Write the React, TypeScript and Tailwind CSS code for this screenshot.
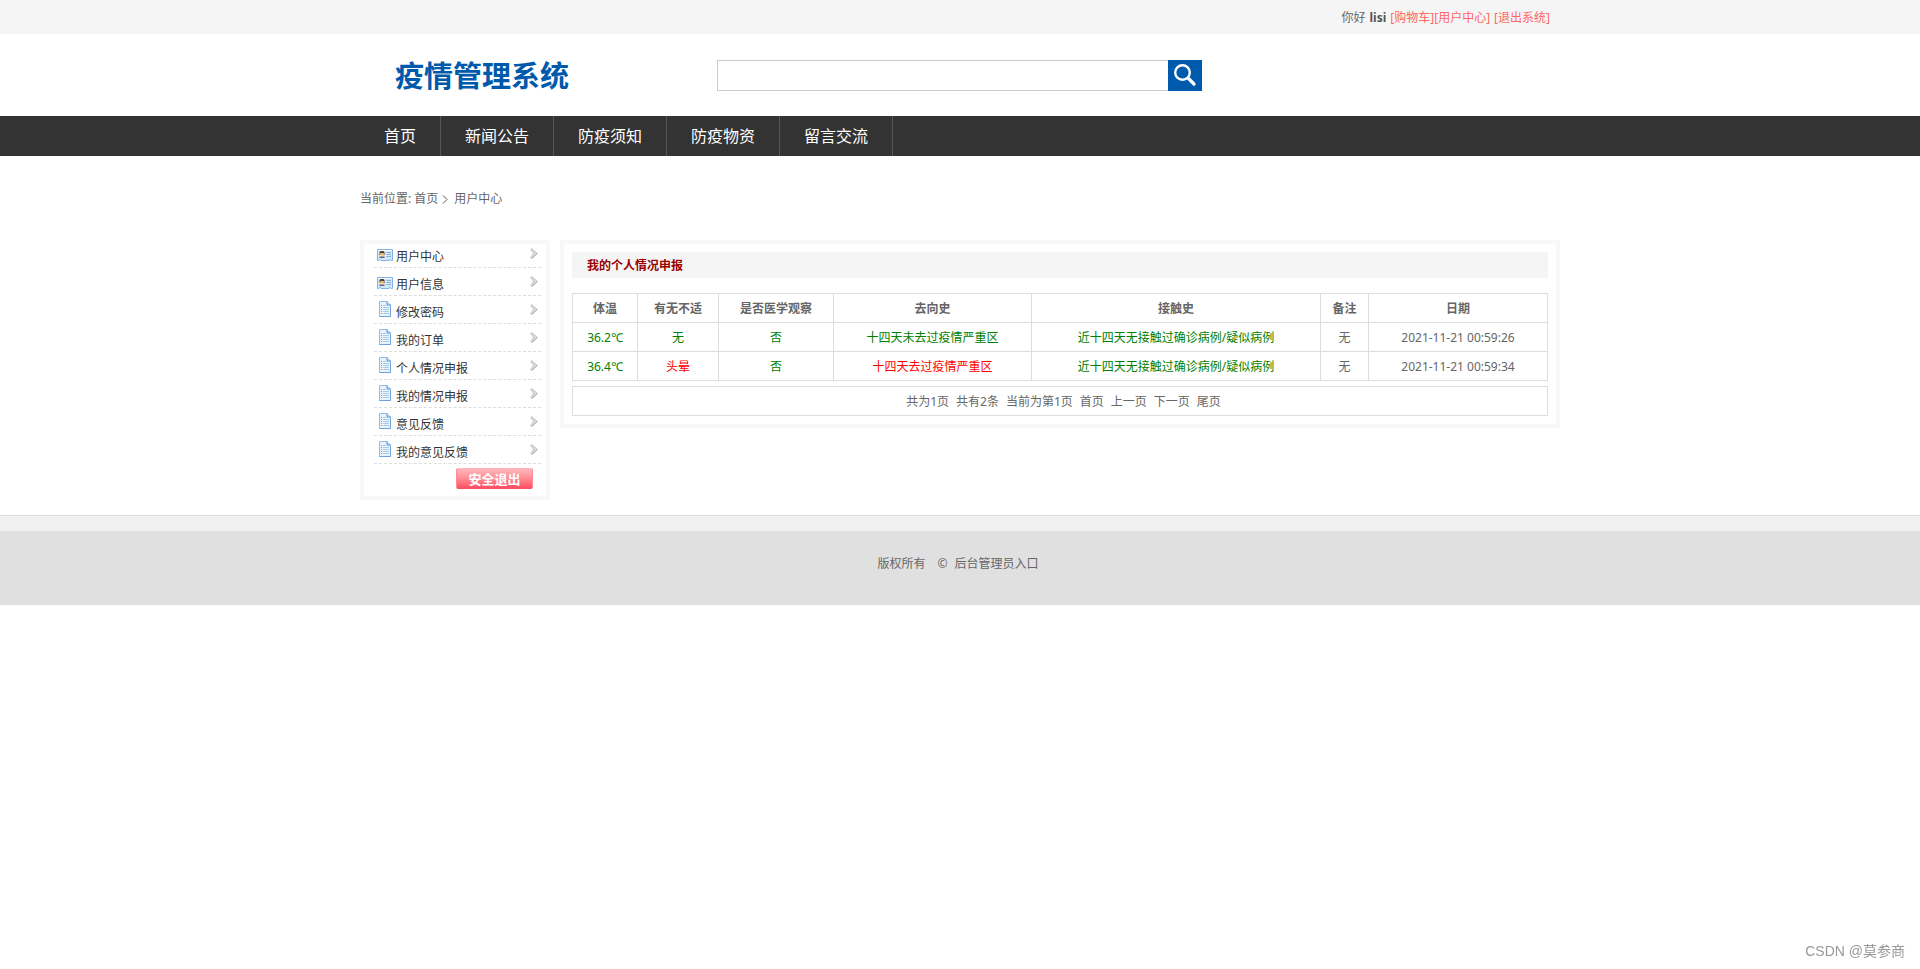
import React from "react";

const navItems = ["首页", "新闻公告", "防疫须知", "防疫物资", "留言交流"];

const menuItems = [
  { label: "用户中心", icon: "card" },
  { label: "用户信息", icon: "card" },
  { label: "修改密码", icon: "doc" },
  { label: "我的订单", icon: "doc" },
  { label: "个人情况申报", icon: "doc" },
  { label: "我的情况申报", icon: "doc" },
  { label: "意见反馈", icon: "doc" },
  { label: "我的意见反馈", icon: "doc" },
];

const columns = [
  { title: "体温", width: "w-[65px]" },
  { title: "有无不适", width: "w-[81px]" },
  { title: "是否医学观察", width: "w-[115px]" },
  { title: "去向史", width: "w-[198px]" },
  { title: "接触史", width: "w-[289px]" },
  { title: "备注", width: "w-[48px]" },
  { title: "日期", width: "" },
];

const GOOD = "text-[#008000]";
const BAD = "text-[#ff0000]";

const rows = [
  [
    ["36.2℃", GOOD],
    ["无", GOOD],
    ["否", GOOD],
    ["十四天未去过疫情严重区", GOOD],
    ["近十四天无接触过确诊病例/疑似病例", GOOD],
    ["无", ""],
    ["2021-11-21 00:59:26", ""],
  ],
  [
    ["36.4℃", GOOD],
    ["头晕", BAD],
    ["否", GOOD],
    ["十四天去过疫情严重区", BAD],
    ["近十四天无接触过确诊病例/疑似病例", GOOD],
    ["无", ""],
    ["2021-11-21 00:59:34", ""],
  ],
];

function CardIcon() {
  return (
    <svg width="16" height="16" viewBox="0 0 16 16" aria-hidden="true">
      <path d="M.5 2.5h15v11h-1.500l-.5-1h-1l-.5 1h-8l-.5-1h-1l-.5 1H.5z" fill="#d4e8fb" stroke="#7fb3e6" />
      <path d="M1 3h14v1H1z" fill="#f4faff" />
      <path d="M2.500 4h5v7h-5z" fill="#f7ead0" />
      <path d="M3.500 4h3l1 1v3h-1V6h-3v2h-1V5z" fill="#4a4038" />
      <path d="M3.500 6h3v2.500h-3z" fill="#f2b968" />
      <path d="M2.500 9.500h5V11h-5z" fill="#56677c" />
      <path d="M9.500 5.500H14M9.500 7.500H14M9.500 9.500H14" stroke="#8fb0d2" />
    </svg>
  );
}

function DocIcon() {
  return (
    <svg width="16" height="16" viewBox="0 0 16 16" aria-hidden="true">
      <path d="M2.500.5h7.500l3.500 3.500v11.500h-11z" fill="#e9f3fc" stroke="#8dbbe8" />
      <path d="M10 .5v3.500h3.500" fill="#b9d7f3" stroke="#5d94cc" />
      <path d="M2.500 15.500h11V5" fill="none" stroke="#6ea3da" />
      <path d="M6 4.500h3M6 6.500h6M6 8.500h6M6 10.500h6M6 12.500h6" stroke="#a9c8e6" />
      <path d="M4 4.500h1M4 6.500h1M4 8.500h1M4 10.500h1M4 12.500h1" stroke="#5fb56c" />
    </svg>
  );
}

function ArrowIcon() {
  return (
    <svg width="8" height="11" viewBox="0 0 8 11" aria-hidden="true">
      <path d="M.6 1.500L2 .6 7.400 5.500 2 10.400.6 9.500 3.600 5.500z" fill="#dcdcdc" stroke="#bcbcbc" strokeWidth=".8" />
      <path d="M7.200 5.500L2 10.200" stroke="#a4a4a4" strokeWidth=".8" />
    </svg>
  );
}

export default function App() {
  return (
    <div className="min-h-screen bg-white font-['Noto_Sans','Noto_Sans_CJK_SC',sans-serif] text-xs text-[#666]">
      <div className="bg-[#f5f5f5]">
        <div className="mx-auto flex h-[34px] max-w-[1200px] items-center justify-end gap-1 pt-0.5 pr-[10px]">
          <span>你好</span>
          <b className="text-[#555]">lisi</b>
          <span className="text-[#ff6666]">
            <a href="#cart">[购物车]</a>
            <a href="#user">[用户中心]</a>
          </span>
          <a href="#logout" className="text-[#ff6666]">[退出系统]</a>
        </div>
      </div>

      <header className="mx-auto flex h-[82px] max-w-[1200px] items-center">
        <h1 className="w-[357px] pt-0.5 pl-[35px] text-[29px] leading-8 font-bold text-[#005aab]">疫情管理系统</h1>
        <form className="flex" role="search" onSubmit={(e) => e.preventDefault()}>
          <input
            type="text"
            aria-label="搜索"
            className="h-[31px] w-[451px] border border-r-0 border-[#ccc] bg-white px-2 text-sm outline-none"
          />
          <button type="submit" aria-label="提交搜索" className="flex h-[31px] w-[34px] items-center justify-center bg-[#005aab]">
            <svg width="24" height="24" viewBox="0 0 24 24" fill="none" stroke="#fff" aria-hidden="true">
              <circle cx="9.500" cy="9.500" r="7.300" strokeWidth="2.400" />
              <path d="M15.500 15.500l5.500 5.500" strokeWidth="3.200" strokeLinecap="round" />
            </svg>
          </button>
        </form>
      </header>

      <nav className="bg-[#333]">
        <ul className="mx-auto flex max-w-[1200px]">
          {navItems.map((item) => (
            <li key={item} className="border-r border-[#555]">
              <a href="#nav" className="block px-6 text-base leading-10 text-white">{item}</a>
            </li>
          ))}
        </ul>
      </nav>

      <div className="mx-auto max-w-[1200px]">
        <div className="flex h-[84px] items-center pt-0.5">
          <span>当前位置:</span>
          <a href="#home" className="ml-[3px]">首页</a>
          <svg className="mx-1" width="6" height="9" viewBox="0 0 6 9" fill="none" stroke="#555" aria-hidden="true">
            <path d="M1 .5l4 4-4 4" />
          </svg>
          <a href="#user" className="ml-[2px]">用户中心</a>
        </div>

        <div className="flex items-start gap-[10px]">
          <aside className="w-[190px] shrink-0 border-4 border-[#f8f8f8] px-[10px] pb-[7px]">
            <ul>
              {menuItems.map((item, i) => (
                <li key={item.label} className={i === 0 ? "h-6" : "h-7"}>
                  <a
                    href="#menu"
                    className="flex h-full w-[167px] items-end border-b border-dashed border-[#ddd] pr-[3px] pb-px pl-[3px] text-[#333]"
                  >
                    <span className={item.icon === "card" ? "pb-[3px]" : "pb-[5px]"}>
                      {item.icon === "card" ? <CardIcon /> : <DocIcon />}
                    </span>
                    <span className="ml-[3px] leading-[18px]">{item.label}</span>
                    <span className="ml-auto pb-[7px]">
                      <ArrowIcon />
                    </span>
                  </a>
                </li>
              ))}
            </ul>
            <div className="flex justify-end pt-1 pr-[3px]">
              <button
                type="button"
                className="h-[21px] w-[77px] rounded-xs border border-[#ff8a96] border-t-[#ffb3ba] border-b-[#fb5468] bg-linear-to-b from-[#ffb0b5] from-10% via-[#ff8f98] via-45% to-[#ff4d63] text-[13px] leading-[18px] font-bold text-white"
              >
                安全退出
              </button>
            </div>
          </aside>

          <main className="min-w-0 flex-1 border-4 border-[#f8f8f8] p-2">
            <h2 className="bg-[#f5f5f5] pt-0.5 pl-[15px] leading-6 font-bold text-[#990000]">我的个人情况申报</h2>
            <table className="mt-[15px] w-full table-fixed border-separate border-spacing-0 border-t border-l border-[#ddd] text-center">
              <thead>
                <tr>
                  {columns.map((c) => (
                    <th key={c.title} className={`h-[29px] border-r border-b border-[#ddd] p-0 pt-0.5 font-bold ${c.width}`}>{c.title}</th>
                  ))}
                </tr>
              </thead>
              <tbody>
                {rows.map((row, r) => (
                  <tr key={r}>
                    {row.map(([text, tone], c) => (
                      <td key={c} className={`h-[29px] border-r border-b border-[#ddd] p-0 pt-0.5 ${tone}`}>{text}</td>
                    ))}
                  </tr>
                ))}
              </tbody>
            </table>
            <div className="mt-[5px] flex h-[30px] items-center justify-center gap-[7px] border border-[#ddd] pt-0.5 pl-[7px]">
              <span>共为1页</span>
              <span>共有2条</span>
              <span>当前为第1页</span>
              <a href="#first">首页</a>
              <a href="#prev">上一页</a>
              <a href="#next">下一页</a>
              <a href="#last">尾页</a>
            </div>
          </main>
        </div>
      </div>

      <footer className="mt-[15px] border-t border-[#ddd] bg-[#f1f1f1] pt-[15px]">
        <div className="flex h-[74px] justify-center bg-[#e0e0e0] pt-6 pr-1 leading-[18px]">
          <span>版权所有</span>
          <span className="ml-3">©</span>
          <a href="#admin" className="ml-[7px]">后台管理员入口</a>
        </div>
      </footer>

      <div className="fixed right-[15px] bottom-2 text-sm leading-5 text-[#999] font-['Liberation_Sans','Noto_Sans_CJK_SC',sans-serif]">
        CSDN @莫参商
      </div>
    </div>
  );
}
